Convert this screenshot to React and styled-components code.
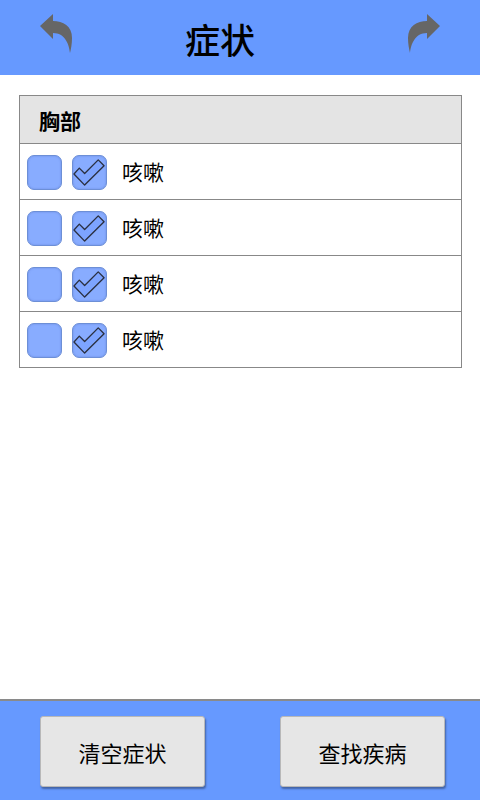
import React, { useState } from "react";
import styled, { createGlobalStyle } from "styled-components";

const GlobalStyle = createGlobalStyle`
  html, body {
    margin: 0;
    padding: 0;
    background: #ffffff;
  }
  body {
    font-family: "Liberation Serif", "Noto Sans CJK SC", serif;
  }
`;

const SYMPTOMS = ["咳嗽", "咳嗽", "咳嗽", "咳嗽"];

const Arrow = ({ flip }) => (
  <svg width="36" height="42" viewBox="0 0 36 42" style={flip ? { transform: "scaleX(-1)" } : undefined}>
    <path
      d="M2 14 L15 2 L15 9 C25 9 34 14 34 26 C34 32 33 37 32 41 C31 32 27 21 15 21 L15 27 Z"
      fill="#666666"
    />
  </svg>
);

const Check = () => (
  <svg width="34" height="34" viewBox="0 0 34 34">
    <path
      d="M1 19 L6.5 13 L12 18.5 L26 4.5 L32 10.5 L12 30.5 Z"
      fill="#7da4ff"
      stroke="#2b3142"
      strokeWidth="1.4"
      strokeLinejoin="round"
    />
  </svg>
);

const App = () => {
  const [checked, setChecked] = useState(SYMPTOMS.map(() => true));

  const toggle = i => {
    setChecked(checked.map((c, j) => (j === i ? !c : c)));
  };

  return (
    <Page>
      <GlobalStyle />
      <Header>
        <IconButton>
          <Arrow />
        </IconButton>
        <Title>症状</Title>
        <IconButton>
          <Arrow flip />
        </IconButton>
      </Header>
      <Content>
        <Table>
          <GroupTitle>胸部</GroupTitle>
          {SYMPTOMS.map((s, i) => (
            <Row key={i}>
              <Box />
              <Box onClick={() => toggle(i)}>{checked[i] && <Check />}</Box>
              <Label>{s}</Label>
            </Row>
          ))}
        </Table>
      </Content>
      <Footer>
        <ActionButton>清空症状</ActionButton>
        <ActionButton>查找疾病</ActionButton>
      </Footer>
    </Page>
  );
};

export default App;

const Page = styled.div`
  display: flex;
  flex-direction: column;
  width: 480px;
  height: 800px;
  overflow: hidden;
`;

const Header = styled.div`
  display: flex;
  align-items: center;
  justify-content: space-between;
  height: 75px;
  padding: 0 38px 0 38px;
  box-sizing: border-box;
  background: #6699ff;
`;

const IconButton = styled.div`
  display: flex;
  width: 36px;
  height: 42px;
  margin-top: -9px;
`;

const Title = styled.h1`
  margin: 0 40px 0 0;
  padding-top: 2px;
  color: #000000;
  font-family: "Noto Sans CJK SC", serif;
  font-size: 35px;
  font-weight: 500;
`;

const Content = styled.div`
  flex: 1;
  padding: 20px 18px 0 19px;
`;

const Table = styled.div`
  border: 1px solid #888888;
  border-bottom: none;
`;

const GroupTitle = styled.div`
  display: flex;
  align-items: center;
  height: 47px;
  padding-left: 19px;
  border-bottom: 1px solid #888888;
  background: #e4e4e4;
  color: #000000;
  font-family: "Noto Sans CJK SC", serif;
  font-size: 21px;
  font-weight: 700;
`;

const Row = styled.div`
  display: flex;
  align-items: center;
  gap: 10px;
  height: 55px;
  padding-left: 7px;
  border-bottom: 1px solid #888888;
`;

const Box = styled.div`
  display: flex;
  align-items: center;
  justify-content: center;
  width: 33px;
  height: 33px;
  margin-top: 1px;
  border: 1px solid #6d8fd6;
  border-radius: 7px;
  background: #88acff;
  box-shadow: inset 0 0 2px rgba(60, 90, 170, 0.4);
`;

const Label = styled.span`
  margin-left: 5px;
  margin-top: -2px;
  color: #000000;
  font-family: "Noto Sans CJK SC", serif;
  font-size: 21px;
  font-weight: 400;
`;

const Footer = styled.div`
  display: flex;
  align-items: center;
  justify-content: space-between;
  height: 101px;
  padding: 0 35px 0 40px;
  box-sizing: border-box;
  border-top: 2px solid #8a8a8a;
  background: #6699ff;
`;

const ActionButton = styled.button`
  width: 165px;
  height: 71px;
  margin-top: 2px;
  border: 1px solid #b8b8b8;
  border-radius: 3px;
  background: #e6e6e6;
  box-shadow: 1px 2px 2px rgba(0, 0, 0, 0.35);
  color: #000000;
  font-family: "Noto Sans CJK SC", sans-serif;
  font-size: 22px;
`;
